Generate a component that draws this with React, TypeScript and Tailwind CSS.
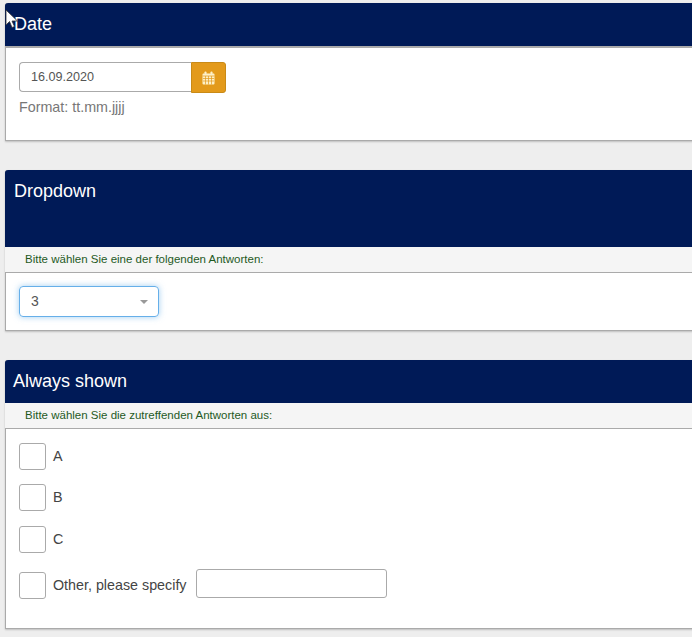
const font = { fontFamily: '"Liberation Sans", Arial, sans-serif' }

function Cursor() {
  return (
    <svg className="absolute left-[5px] top-[9px]" width="14" height="20" viewBox="0 0 14 20">
      <path d="M1 1 L1 16 L4.5 12.5 L7 18.5 L9.5 17.5 L7 12 L12.5 12 Z" fill="#ffffff" stroke="#333333" strokeWidth="0.8" />
    </svg>
  )
}

function CalendarIcon() {
  return (
    <svg width="13" height="14" viewBox="0 0 13 14">
      <path d="M1.5 2.5h10a1 1 0 0 1 1 1v9a1 1 0 0 1-1 1h-10a1 1 0 0 1-1-1v-9a1 1 0 0 1 1-1z" fill="#fdf0c8" />
      <rect x="2.5" y="0.5" width="2" height="3.5" rx="0.8" fill="#fdf0c8" />
      <rect x="8.5" y="0.5" width="2" height="3.5" rx="0.8" fill="#fdf0c8" />
      <path d="M0.5 5h12M1 7.5h11M1 10h11M3.5 5v8.5M6.5 5v8.5M9.5 5v8.5" stroke="#e39a1b" strokeWidth="0.7" />
    </svg>
  )
}

function Hint({ children }: { children: string }) {
  return (
    <div className="-ml-px h-[26px] bg-[#f5f5f5] border-b border-[#aaaaaa] pl-[20px] text-[11.5px] leading-[25px] text-[#1f5a1f]">
      {children}
    </div>
  )
}

function CheckRow({ label, className }: { label: string; className: string }) {
  return (
    <div className={`flex items-center gap-[7px] ${className}`}>
      <div className="h-[27px] w-[27px] rounded-[3px] border border-[#aaaaaa] bg-white" />
      <span className="text-[14.3px] text-[#444444]">{label}</span>
    </div>
  )
}

export default function App() {
  return (
    <div className="relative h-[637px] w-[692px] overflow-hidden bg-[#eeeeee] pl-[5px] pt-[3px]" style={font}>
      <section className="w-[720px] h-[138px] rounded-t-[3px] bg-white border-b border-l border-[#aaaaaa] shadow-[0_1px_2px_rgba(0,0,0,0.2)]">
        <h2 className="-ml-px h-[43px] rounded-t-[3px] bg-[#001a57] pl-[9px] text-[18px] leading-[42px] text-white">Date</h2>
        <div className="-ml-px h-[2px] bg-[#aaaaaa]" />
        <div className="pl-[13px] pt-[14px]">
          <div className="flex">
            <div className="h-[30px] w-[172px] rounded-l-[4px] border border-r-0 border-[#aaaaaa] pl-[11px] text-[12.6px] leading-[28px] text-[#555555]">
              16.09.2020
            </div>
            <button className="flex h-[31px] w-[35px] items-center justify-center rounded-r-[3px] border border-[#c98a17] bg-[#e39a1b]">
              <CalendarIcon />
            </button>
          </div>
          <p className="mt-[4px] text-[14.3px] leading-[20px] text-[#777777]">Format: tt.mm.jjjj</p>
        </div>
      </section>

      <section className="mt-[29px] w-[720px] h-[161px] rounded-t-[3px] bg-white border-b border-l border-[#aaaaaa] shadow-[0_1px_2px_rgba(0,0,0,0.2)]">
        <h2 className="-ml-px h-[77px] rounded-t-[3px] bg-[#001a57] pl-[9px] pt-[11px] text-[18px] leading-[20px] text-white">Dropdown</h2>
        <Hint>Bitte wählen Sie eine der folgenden Antworten:</Hint>
        <div className="pl-[13px] pt-[13px]">
          <div className="flex h-[31px] w-[140px] items-center justify-between rounded-[4px] border border-[#66afe9] pl-[11px] pr-[10px] text-[14px] text-[#555555] shadow-[0_0_6px_rgba(102,175,233,0.6)]">
            <span>3</span>
            <span className="h-0 w-0 border-x-[4px] border-t-[4px] border-x-transparent border-t-[#999999]" />
          </div>
        </div>
      </section>

      <section className="mt-[29px] w-[720px] h-[269px] rounded-t-[3px] bg-white border-b border-l border-[#aaaaaa] shadow-[0_1px_2px_rgba(0,0,0,0.2)]">
        <h2 className="-ml-px h-[43px] rounded-t-[3px] bg-[#001a57] pl-[8px] text-[18px] leading-[42px] text-white">Always shown</h2>
        <Hint>Bitte wählen Sie die zutreffenden Antworten aus:</Hint>
        <div className="pl-[13px] pt-[14px]">
          <CheckRow label="A" className="" />
          <CheckRow label="B" className="mt-[14px]" />
          <CheckRow label="C" className="mt-[15px]" />
          <div className="mt-[19px] flex items-center">
            <CheckRow label="Other, please specify" className="" />
            <div className="-mt-[4px] ml-[9px] h-[29px] w-[191px] rounded-[3px] border border-[#aaaaaa] bg-white" />
          </div>
        </div>
      </section>

      <Cursor />
    </div>
  )
}
